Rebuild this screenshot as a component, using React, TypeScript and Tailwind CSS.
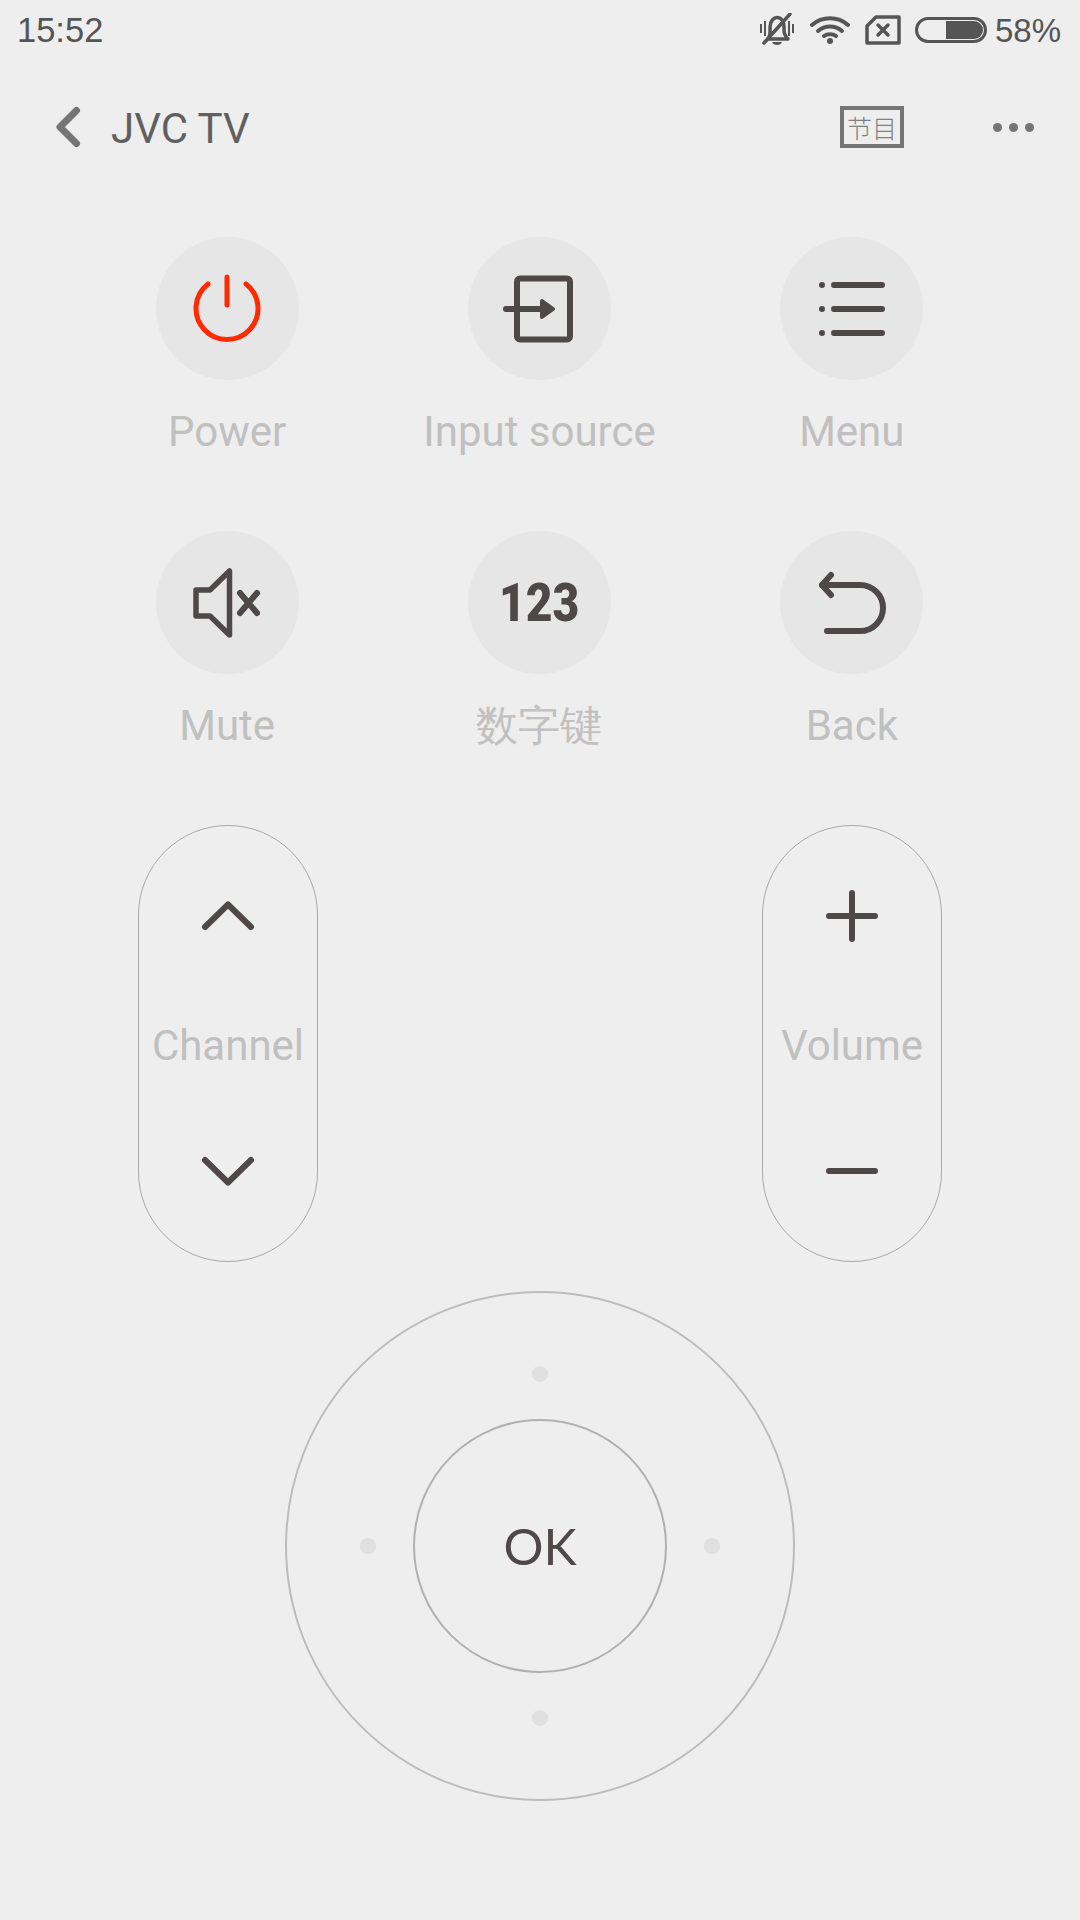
const DARK = "#4e4848";

function Icon({ children }: { children: React.ReactNode }) {
  return (
    <svg viewBox="-72 -72 144 144" className="w-[144px] h-[144px] shrink-0" fill="none" stroke={DARK} strokeWidth={6} strokeLinecap="round" strokeLinejoin="round">
      {children}
    </svg>
  );
}

function Cell({ label, children }: { label: string; children: React.ReactNode }) {
  return (
    <div className="flex flex-col items-center h-[294px]">
      <div className="w-[143px] h-[143px] rounded-full bg-[#e6e6e6] flex items-center justify-center shrink-0">{children}</div>
      <div className="mt-[24px] text-[42px] leading-[56px] text-[#c0c0c0] whitespace-nowrap">{label}</div>
    </div>
  );
}

function Pill({ label, top, bottom }: { label: string; top: React.ReactNode; bottom: React.ReactNode }) {
  return (
    <div className="w-[180px] h-[437px] rounded-full border border-[#a8a8a8] flex flex-col items-center justify-between py-[60px]">
      <svg viewBox="-30 -30 60 60" className="w-[60px] h-[60px]" fill="none" stroke={DARK} strokeWidth={6} strokeLinecap="round" strokeLinejoin="round">{top}</svg>
      <div className="text-[42px] leading-[56px] text-[#c0c0c0] pt-[4px]">{label}</div>
      <svg viewBox="-30 -30 60 60" className="w-[60px] h-[60px]" fill="none" stroke={DARK} strokeWidth={6} strokeLinecap="round" strokeLinejoin="round">{bottom}</svg>
    </div>
  );
}

function Dot() {
  return <div className="w-4 h-4 rounded-full bg-[#e0e0e0] shrink-0" />;
}

export default function App() {
  return (
    <div className="w-[1080px] h-[1920px] bg-[#eeeeee] flex flex-col overflow-hidden font-['Roboto',sans-serif]">
      {/* status bar */}
      <div className="h-[60px] flex items-center pl-[17px] pr-[19px] text-[#555555]">
        <span className="text-[34.5px] leading-none font-['Liberation_Sans',sans-serif]">15:52</span>
        <div className="ml-auto flex items-center">
          <svg viewBox="0 0 36 34" className="w-[36px] h-[34px]" fill="none" stroke="#555555" strokeWidth={3.5}>
            <path d="M9 26 C12 22 11 17 11 14 C11 8 15 4.5 18 4.5 C22 4.5 25 8 25 14 V17 C25 21 27 24 29 26 Z" strokeLinejoin="round" />
            <path d="M13 29 H23 C22 33 14 33 13 29 Z" fill="#555555" stroke="none" />
            <path d="M5 30 L31 1" strokeLinecap="round" />
            <path d="M2 11 V20 M6 8 V23 M30 8 V23 M34 11 V20" strokeWidth={2} />
          </svg>
          <svg viewBox="0 0 40 30" className="w-[40px] h-[30px] ml-[15px]" fill="none" stroke="#555555" strokeWidth={4} strokeLinecap="round">
            <path d="M2 10 C12 1 28 1 38 10" />
            <path d="M8 16 C15 10 25 10 32 16" />
            <path d="M14 21 C17 18.5 23 18.5 26 21" />
            <circle cx="20" cy="26" r="3" fill="#555555" stroke="none" />
          </svg>
          <svg viewBox="0 0 36 30" className="w-[36px] h-[30px] ml-[15px]" fill="none" stroke="#555555" strokeWidth={3.5} strokeLinejoin="round">
            <path d="M11 2 H34 V28 H2 V11 Z" />
            <path d="M13 10 L23 20 M23 10 L13 20" strokeLinecap="round" />
          </svg>
          <div className="w-[72px] h-[26px] ml-[14px] rounded-full border-[3px] border-[#555555] flex justify-end items-center pr-[1px]">
            <div className="w-[37px] h-[18px] bg-[#555555] rounded-r-full" />
          </div>
          <span className="ml-[8px] text-[33px] leading-none font-['Liberation_Sans',sans-serif]">58%</span>
        </div>
      </div>

      {/* header */}
      <div className="h-[134px] flex items-center pl-[55px] pr-[46px] shrink-0">
        <svg viewBox="0 0 26 42" className="w-[26px] h-[42px]" fill="none" stroke="#757575" strokeWidth={7} strokeLinecap="round" strokeLinejoin="round">
          <path d="M21.5 4.5 L5 21 L21.5 37.5" />
        </svg>
        <span className="ml-[30px] pt-[3px] text-[42px] leading-none text-[#606060]">JVC TV</span>
        <div className="ml-auto w-[64px] h-[42px] border-[4px] border-[#757575] flex items-center justify-center text-[25px] leading-none font-light text-[#808080] font-['Noto_Sans_CJK_SC',sans-serif]">节目</div>
        <div className="ml-[89px] flex gap-[7px]">
          <div className="w-[9px] h-[9px] rounded-full bg-[#757575]" />
          <div className="w-[9px] h-[9px] rounded-full bg-[#757575]" />
          <div className="w-[9px] h-[9px] rounded-full bg-[#757575]" />
        </div>
      </div>

      {/* buttons */}
      <div className="grid grid-cols-3 pl-[71px] pr-[72px] pt-[43px]">
        <Cell label="Power">
          <Icon>
            <g stroke="#ff2a00" strokeWidth={5}>
              <path d="M0 -32 V-4" />
              <path d="M-19 -25 A31 31 0 1 0 19 -25" />
            </g>
          </Icon>
        </Cell>
        <Cell label="Input source">
          <Icon>
            <rect x="-22" y="-30.5" width="53" height="61" rx="3" />
            <path d="M-33 0 H3" />
            <path d="M3 -8 L14 0 L3 8 Z" fill={DARK} strokeWidth={4} />
          </Icon>
        </Cell>
        <Cell label="Menu">
          <Icon>
            <path d="M-18 -24 H30 M-18 0 H30 M-18 24 H30" />
            <g fill={DARK} stroke="none">
              <circle cx="-30" cy="-24" r="3" />
              <circle cx="-30" cy="0" r="3" />
              <circle cx="-30" cy="24" r="3" />
            </g>
          </Icon>
        </Cell>
        <Cell label="Mute">
          <Icon>
            <g strokeWidth={5.5}>
              <path d="M-31 -13 H-17 L2.5 -32 V32 L-17 13 H-31 Z" />
              <path d="M13 -10 L30 10 M30 -10 L13 10" strokeWidth={6} />
            </g>
          </Icon>
        </Cell>
        <Cell label="数字键">
          <span className="pt-[2px] text-[53px] leading-none font-black text-[#4e4848] scale-x-[0.87] font-['Roboto',sans-serif]">123</span>
        </Cell>
        <Cell label="Back">
          <Icon>
            <path d="M-21 -28 L-30 -18 L-21 -8" />
            <path d="M-30 -18 H8 A23 23 0 0 1 8 28 H-25" />
          </Icon>
        </Cell>
      </div>

      {/* pills */}
      <div className="flex justify-between px-[138px]">
        <Pill label="Channel" top={<path d="M-23 11 L0 -11.5 L23 11" />} bottom={<path d="M-23 -11 L0 11.5 L23 -11" />} />
        <Pill label="Volume" top={<path d="M-23 0 H23 M0 -23 V23" />} bottom={<path d="M-23 0 H23" />} />
      </div>

      {/* d-pad */}
      <div className="mt-[29px] self-center w-[510px] h-[510px] rounded-full border-2 border-[#bcbcbc] flex flex-col items-center gap-[37px] pt-[73px]">
        <Dot />
        <div className="flex items-center gap-[37px]">
          <Dot />
          <div className="w-[254px] h-[254px] rounded-full border-2 border-[#b0b0b0] flex items-center justify-center text-[50px] leading-none text-[#4e4848] font-['Lato',sans-serif]">OK</div>
          <Dot />
        </div>
        <Dot />
      </div>
    </div>
  );
}
